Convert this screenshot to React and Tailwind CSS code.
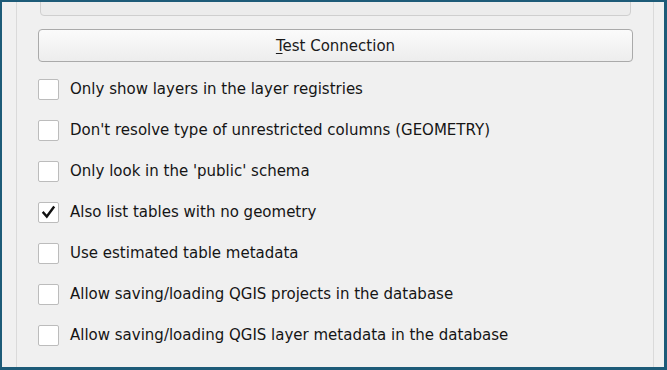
import React from 'react';

const options = [
  { label: 'Only show layers in the layer registries', checked: false },
  { label: "Don't resolve type of unrestricted columns (GEOMETRY)", checked: false },
  { label: "Only look in the 'public' schema", checked: false },
  { label: 'Also list tables with no geometry', checked: true },
  { label: 'Use estimated table metadata', checked: false },
  { label: 'Allow saving/loading QGIS projects in the database', checked: false },
  { label: 'Allow saving/loading QGIS layer metadata in the database', checked: false },
];

const Checkbox = ({ checked }) => (
  <div className="w-[21px] h-[21px] shrink-0 bg-white border border-[#bcbcbc] rounded-[2px] flex items-center justify-center">
    {checked && (
      <svg width="15" height="15" viewBox="0 0 15 15">
        <path d="M2.5 7.8 L5.8 11.5 L12.5 2.5" fill="none" stroke="#111" strokeWidth="2.4" strokeLinecap="square" />
      </svg>
    )}
  </div>
);

export default function App() {
  return (
    <div
      className="w-[667px] h-[370px] overflow-hidden bg-[#1d5b78] pt-[2px] pl-[2px] pr-[3px] pb-[3px]"
      style={{ fontFamily: '"DejaVu Sans", Tahoma, sans-serif' }}
    >
      <div className="h-full bg-[#f0f0f0] pl-[14px] pr-[10px]">
        <div className="h-full border-l border-r border-[#dadada] pl-[21px] pr-[20px] overflow-hidden">
          <div className="-mt-[12px] h-[26px] mx-[2px] border border-[#cfcfcf] rounded-[4px] bg-[#ececec]" />
          <button className="mt-[13px] w-full h-[33px] pt-[2px] rounded-[4px] border border-[#aaaaaa] bg-gradient-to-b from-[#fbfbfb] to-[#ededed] text-[15px] text-[#1a1a1a] flex items-center justify-center">
            <span>
              <span className="underline underline-offset-2">T</span>est Connection
            </span>
          </button>
          <div className="mt-[17px] flex flex-col gap-[20px]">
            {options.map((o) => (
              <div key={o.label} className="flex items-center gap-[11px] h-[21px]">
                <Checkbox checked={o.checked} />
                <span className="text-[15px] text-[#151515] whitespace-nowrap">{o.label}</span>
              </div>
            ))}
          </div>
        </div>
      </div>
    </div>
  );
}
